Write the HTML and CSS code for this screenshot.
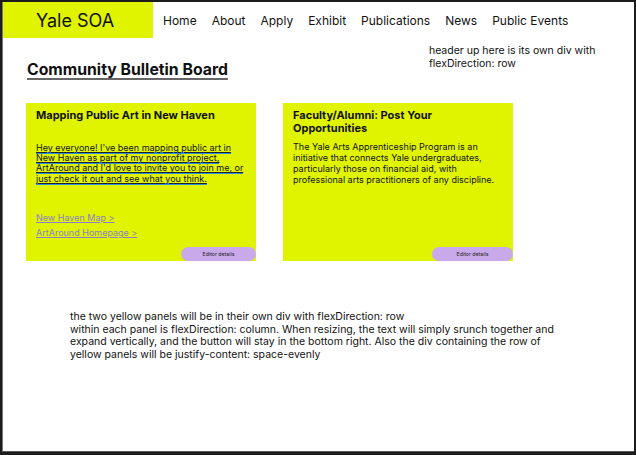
FILE: index.html
```html
<!DOCTYPE html>
<html>
<head>
<meta charset="utf-8">
<link rel="stylesheet" href="styles.css">
</head>
<body>
<div class="page">
  <header class="header">
    <div class="logo">Yale SOA</div>
    <nav class="nav">
      <span>Home</span>
      <span>About</span>
      <span>Apply</span>
      <span>Exhibit</span>
      <span>Publications</span>
      <span>News</span>
      <span>Public Events</span>
    </nav>
  </header>
  <div class="intro">
    <h1 class="title">Community Bulletin Board</h1>
    <p class="note">header up here is its own div with<br>flexDirection: row</p>
  </div>
  <div class="cards">
    <div class="card">
      <h2 class="card-title">Mapping Public Art in New Haven</h2>
      <p class="card-text marked"><span class="hl">Hey everyone! I've been mapping public art in New Haven as part of my nonprofit project, ArtAround and I'd love to invite you to join me, or just check it out and see what you think.</span></p>
      <div class="links">
        <a class="link">New Haven Map &gt;</a>
        <a class="link">ArtAround Homepage &gt;</a>
      </div>
      <button class="editor">Editor details</button>
    </div>
    <div class="card">
      <h2 class="card-title">Faculty/Alumni: Post Your Opportunities</h2>
      <p class="card-text">The Yale Arts Apprenticeship Program is an initiative that connects Yale undergraduates, particularly those on financial aid, with professional arts practitioners of any discipline.</p>
      <button class="editor wide">Editor details</button>
    </div>
  </div>
  <p class="bottom-note">the two yellow panels will be in their own div with flexDirection: row<br>within each panel is flexDirection: column. When resizing, the text will simply srunch together and expand vertically, and the button will stay in the bottom right. Also the div containing the row of yellow panels will be justify-content: space-evenly</p>
</div>
</body>
</html>
```
FILE: styles.css
```css
* { box-sizing: border-box; }
html, body { margin: 0; padding: 0; }
body {
  background: #1c1c1c;
  font-family: Inter, "Noto Sans", sans-serif;
  color: #111;
  height: 455px;
  overflow: hidden;
}
.page {
  margin: 2px 2px 0 2px;
  height: 450px;
  background: #fff;
  border-bottom: 1px solid #5a5a5a;
  border-left: 1px solid #777;
}
.header {
  display: flex;
  align-items: stretch;
  height: 36px;
}
.logo {
  width: 150px;
  background: #e0f400;
  font-size: 18px;
  padding-left: 33px;
  display: flex;
  align-items: center;
  color: #111;
}
.nav {
  display: flex;
  align-items: center;
  gap: 15px;
  margin-left: 10px;
  font-size: 12px;
  color: #111;
}
.intro {
  display: flex;
  align-items: flex-start;
}
.title {
  margin: 22px 0 0 24px;
  font-size: 15.8px;
  font-weight: 700;
  text-decoration: underline;
  text-decoration-color: #666;
  text-decoration-thickness: 2px;
  text-underline-offset: 3px;
  line-height: 20px;
}
.note {
  margin: 6px 0 0 201px;
  font-size: 10.5px;
  line-height: 13px;
  color: #111;
}
.cards {
  display: flex;
  gap: 27px;
  margin: 23px 0 0 23px;
}
.card {
  width: 230px;
  height: 158px;
  background: #e0f400;
  display: flex;
  flex-direction: column;
  padding: 6px 0 0 10px;
}
.card-title {
  margin: 0;
  font-size: 11px;
  font-weight: 700;
  line-height: 13px;
  padding-right: 20px;
}
.card-text {
  margin: 0;
  font-size: 8.5px;
  line-height: 10.5px;
  padding-right: 10px;
}
.marked { margin-top: 21px; padding-right: 10px; font-size: 9px; line-height: 10.2px; }
.hl {
  text-decoration: underline;
  text-decoration-color: #222;
  text-underline-offset: 1px;
  background: linear-gradient(#2e8fd8, #2e8fd8) left bottom / 100% 2px no-repeat;
  -webkit-box-decoration-break: clone;
  box-decoration-break: clone;
  padding-bottom: 1px;
}
.card-text:not(.marked) { margin-top: 6px; font-size: 9px; line-height: 11px; }
.links {
  margin-top: 29px;
  display: flex;
  flex-direction: column;
  gap: 5px;
}
.link {
  font-size: 9px;
  line-height: 10px;
  color: #8c80c8;
  text-decoration: underline;
  align-self: flex-start;
}
.editor {
  margin-top: auto;
  align-self: flex-end;
  width: 75px;
  height: 14px;
  border: none;
  border-radius: 7px;
  background: #c9a9ea;
  font-family: Inter, sans-serif;
  font-size: 5.2px;
  color: #222;
  padding: 0;
}
.editor.wide { width: 81px; }
.bottom-note {
  margin: 50px 60px 0 67px;
  font-size: 10.5px;
  line-height: 12.7px;
  color: #111;
}
```
